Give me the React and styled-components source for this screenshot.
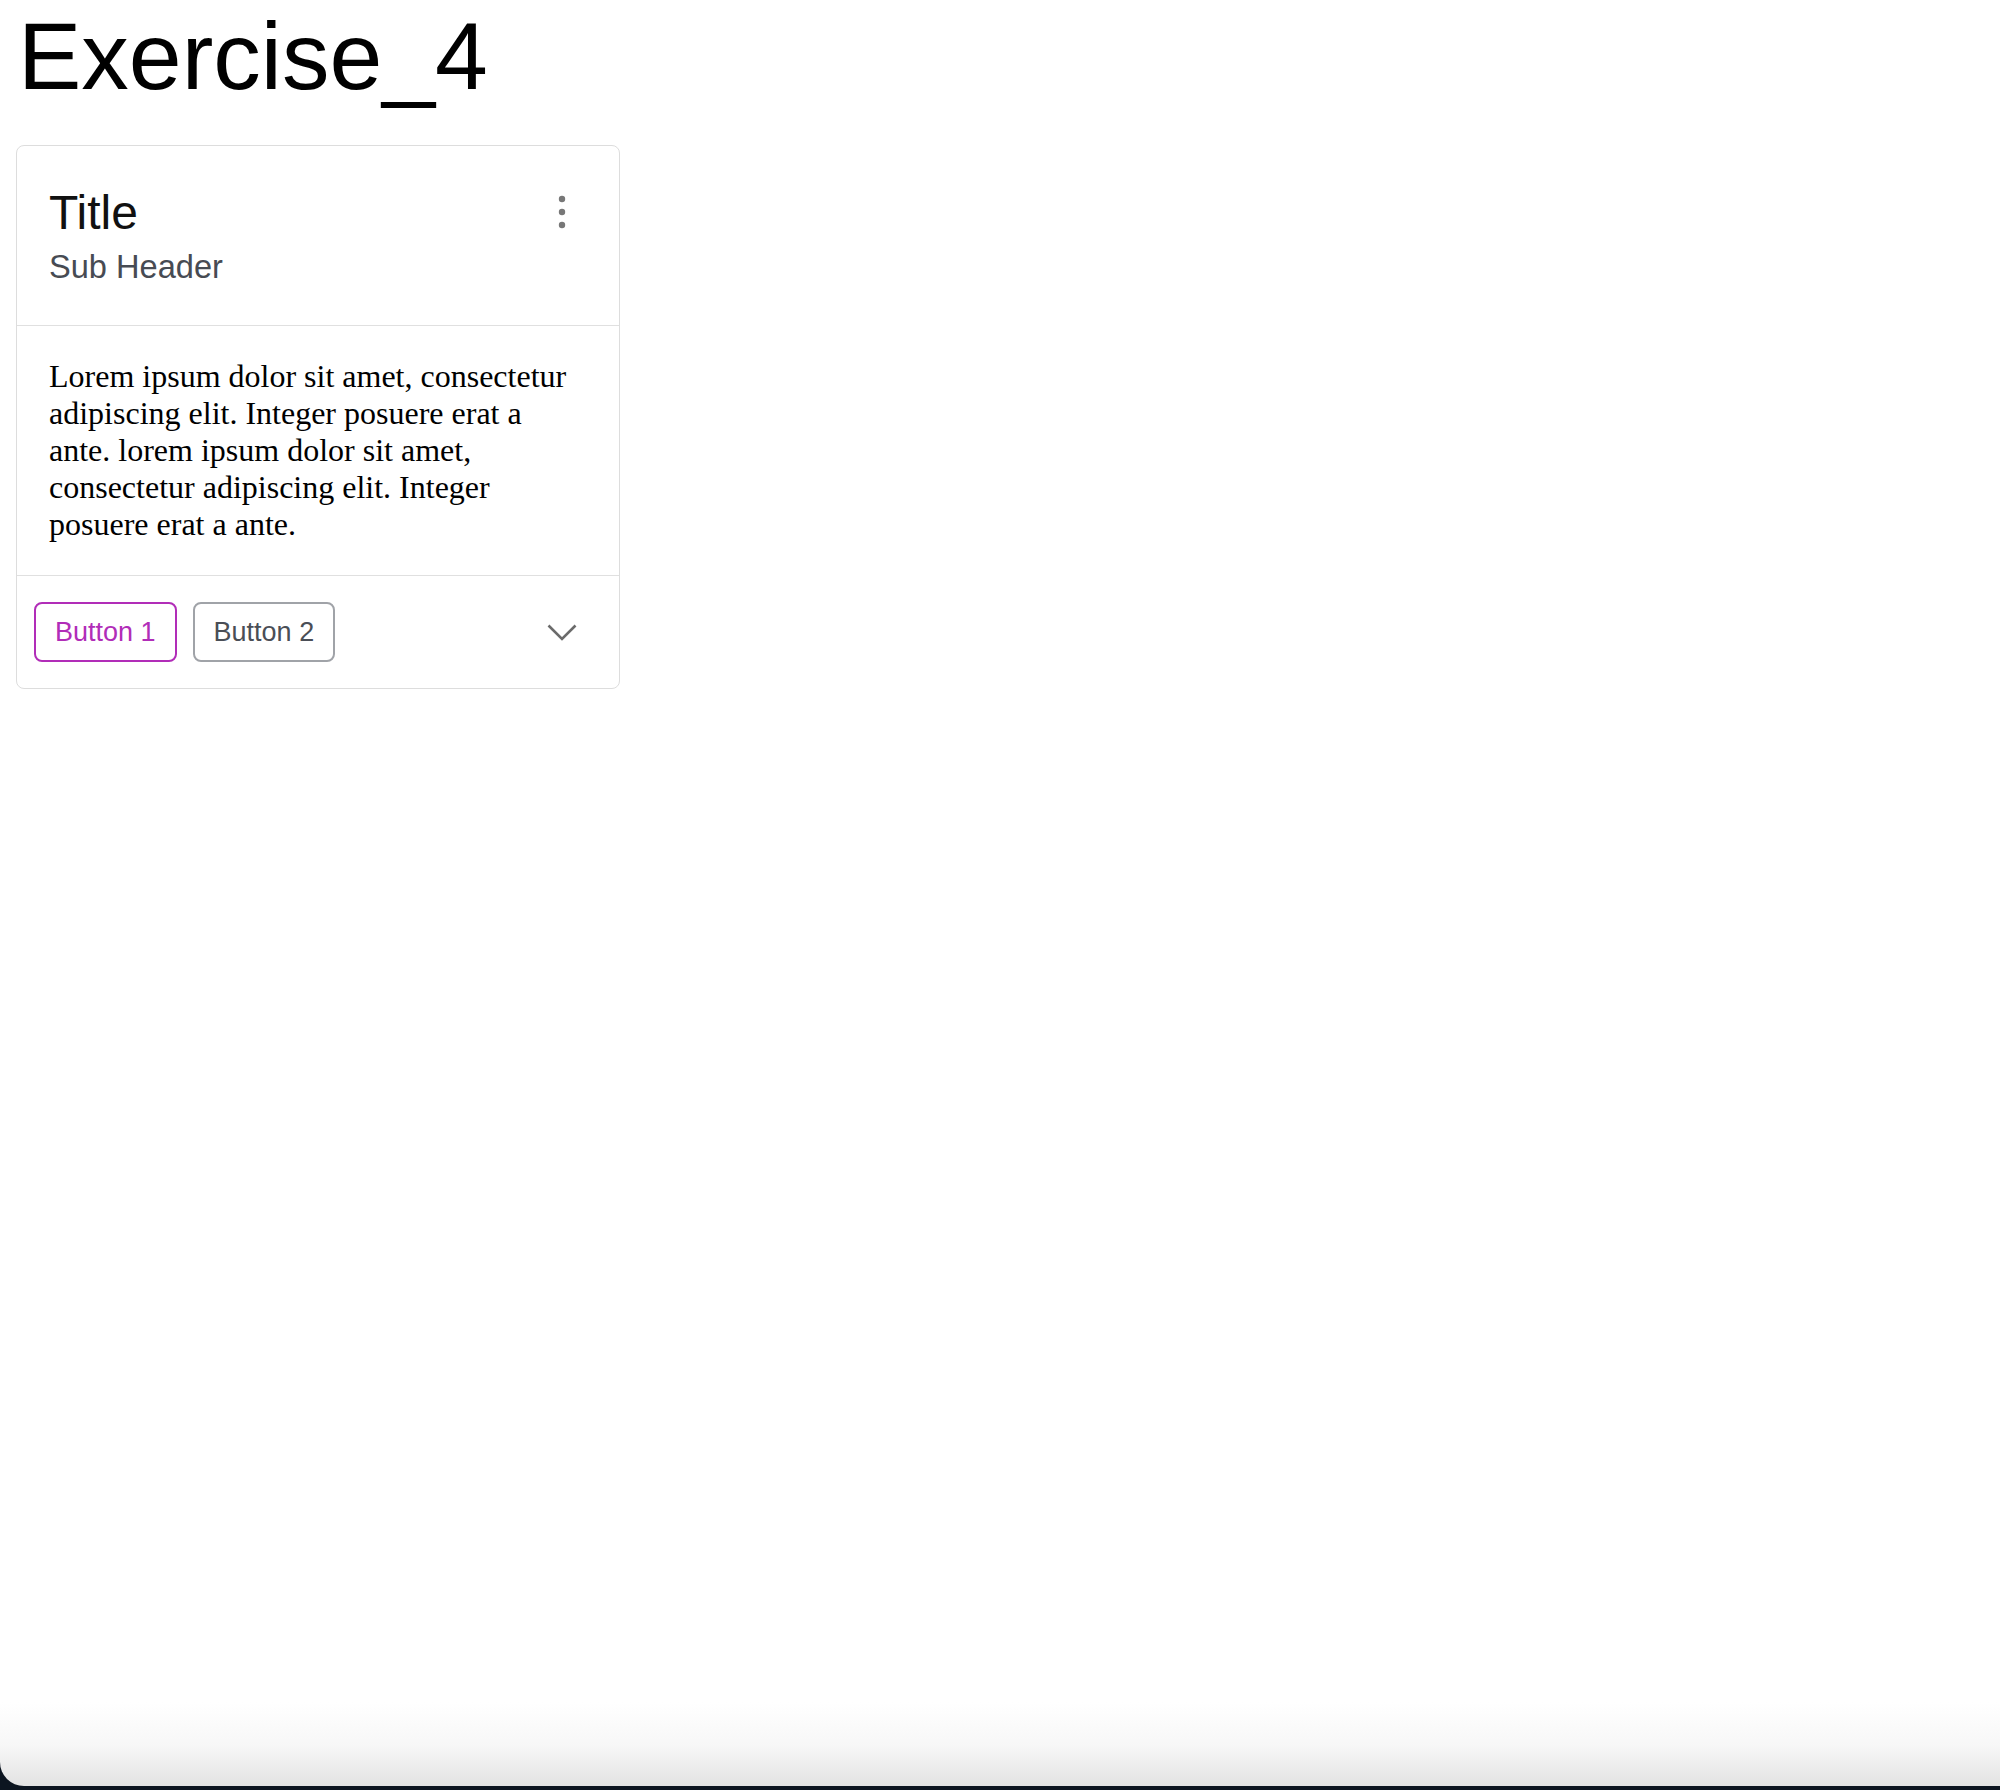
import styled, { createGlobalStyle } from "styled-components"

const Global = createGlobalStyle`
    html, body {
        margin: 0;
        padding: 0;
    }
    body {
        font-family: "Liberation Sans", Arial, sans-serif;
    }
`

const Janela = styled.div`
    min-height: 100vh;
    display: flex;
    flex-direction: column;
    background-color: #0c1520;
`

const Pagina = styled.main`
    flex: 1;
    margin-bottom: 4px;
    padding: 2px 16px;
    border-bottom-left-radius: 24px;
    background: linear-gradient(
        to bottom,
        #ffffff calc(100% - 84px),
        #f7f7f7 calc(100% - 40px),
        #e3e3e3 100%
    );
`

const Titulo = styled.h1`
    margin: 0 0 34px 2px;
    font-size: 95px;
    font-weight: 400;
    color: #000;
`

const Cartao = styled.section`
    width: 604px;
    box-sizing: border-box;
    border: 1px solid #dddddd;
    border-radius: 8px;
    background-color: #fff;
`

const Cabecalho = styled.header`
    display: flex;
    justify-content: space-between;
    align-items: flex-start;
    padding: 39px 33px 39px 32px;
    border-bottom: 1px solid #e0e0e0;
`

const TituloCartao = styled.h2`
    margin: 0;
    font-size: 48px;
    font-weight: 400;
    color: #111;
`

const SubTitulo = styled.p`
    margin: 8px 0 0 0;
    font-size: 32.6px;
    color: #474b53;
`

const Corpo = styled.div`
    padding: 32px;
    border-bottom: 1px solid #e0e0e0;
    font-family: "Liberation Serif", "Times New Roman", serif;
    font-size: 32px;
    color: #000;
    p {
        margin: 0;
    }
`

const Rodape = styled.footer`
    display: flex;
    align-items: center;
    gap: 16px;
    padding: 26px 33px 26px 17px;
`

const Botao = styled.button`
    height: 60px;
    padding: 0 19px;
    border: 2px solid ${(p) => (p.$primario ? "#b12db8" : "#a0a3a8")};
    border-radius: 8px;
    background-color: #fff;
    color: ${(p) => (p.$primario ? "#b12db8" : "#4a4e56")};
    font-family: "Liberation Sans", Arial, sans-serif;
    font-size: 27px;
`

const BotaoIcone = styled.button`
    width: 48px;
    height: 48px;
    padding: 0;
    border: none;
    background: transparent;
    display: flex;
    align-items: center;
    justify-content: center;
    margin-top: ${(p) => (p.$fim ? "0" : "3px")};
    margin-left: ${(p) => (p.$fim ? "auto" : "0")};
`

const Pontos = () => (
    <svg width="48" height="48" viewBox="0 0 48 48">
        <circle cx="24" cy="11" r="3.2" fill="#777" />
        <circle cx="24" cy="24" r="3.2" fill="#777" />
        <circle cx="24" cy="37" r="3.2" fill="#777" />
    </svg>
)

const Seta = () => (
    <svg width="48" height="48" viewBox="0 0 48 48">
        <polyline points="10.5,17.5 24,31 37.5,17.5" fill="none" stroke="#6b6b6b" strokeWidth="2.6" />
    </svg>
)

const App = () => {
    return (
        <Janela>
            <Global />
            <Pagina>
                <Titulo>Exercise_4</Titulo>
                <Cartao>
                    <Cabecalho>
                        <div>
                            <TituloCartao>Title</TituloCartao>
                            <SubTitulo>Sub Header</SubTitulo>
                        </div>
                        <BotaoIcone aria-label="mais">
                            <Pontos />
                        </BotaoIcone>
                    </Cabecalho>
                    <Corpo>
                        <p>
                            Lorem ipsum dolor sit amet, consectetur adipiscing elit. Integer posuere erat a ante.
                            lorem ipsum dolor sit amet, consectetur adipiscing elit. Integer posuere erat a ante.
                        </p>
                    </Corpo>
                    <Rodape>
                        <Botao $primario>Button 1</Botao>
                        <Botao>Button 2</Botao>
                        <BotaoIcone $fim aria-label="expandir">
                            <Seta />
                        </BotaoIcone>
                    </Rodape>
                </Cartao>
            </Pagina>
        </Janela>
    )
}

export default App
